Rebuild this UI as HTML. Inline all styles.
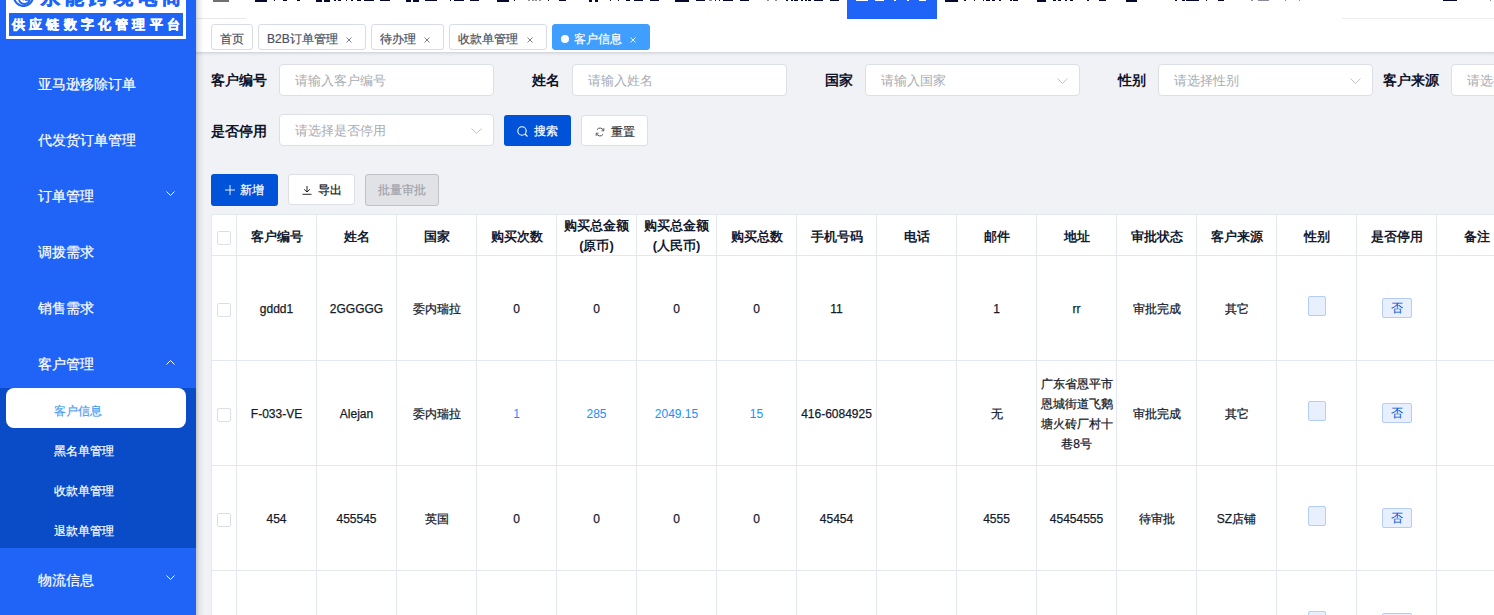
<!DOCTYPE html>
<html><head><meta charset="utf-8">
<style>
*{box-sizing:border-box;margin:0;padding:0}
html,body{width:1494px;height:615px;overflow:hidden}
body{position:relative;background:#f0f2f5;font-family:"Liberation Sans",sans-serif;color:#1f2533}
.abs{position:absolute}
#side{position:absolute;left:0;top:0;width:196px;height:615px;background:#1f64f6;overflow:hidden}
.logo{position:absolute;left:6px;top:-12px;width:180px;height:51px;background:#fff}
.logo .t1{position:absolute;left:35px;top:-2px;font-size:19px;font-weight:bold;color:#1f64f6;letter-spacing:5.2px;white-space:nowrap;line-height:24px;-webkit-text-stroke:0.6px #1f64f6}
.logo .ic{position:absolute;left:7px;top:-1.7px;width:21px;height:21px;border:2.3px solid #1f64f6;border-radius:50%}
.logo .ic2{position:absolute;left:12px;top:2.5px;width:13px;height:13px;border:1.8px solid #1f64f6;border-color:transparent #1f64f6 #1f64f6 #1f64f6;border-radius:50%}
.logo .band{position:absolute;left:3px;top:25px;width:174px;height:23px;background:#1f64f6}
.logo .t2{position:absolute;left:3px;top:4px;font-size:13px;font-weight:bold;color:#fff;letter-spacing:4.2px;white-space:nowrap;line-height:15px;-webkit-text-stroke:0.4px #fff}
.mi{position:absolute;left:38px;font-size:14px;color:#fff;line-height:20px;white-space:nowrap;-webkit-text-stroke:0.2px #fff}
.chev{position:absolute;left:166px;width:9px;height:9px}
.sub{position:absolute;left:0;top:388px;width:196px;height:160px;background:#0a4bc7}
.pill{position:absolute;left:6px;top:388px;width:180px;height:40px;background:#fff;border-radius:8px}
.si{position:absolute;left:54px;font-size:12px;color:#fff;line-height:16px;white-space:nowrap;-webkit-text-stroke:0.2px currentColor}
#hdr{position:absolute;left:196px;top:0;width:1298px;height:19px;background:#fff;overflow:hidden}
#tabs{position:absolute;left:196px;top:19px;width:1298px;height:33px;background:#fff}
.tabsh{position:absolute;left:196px;top:52px;width:1298px;height:4px;background:linear-gradient(to bottom,rgba(40,50,80,.16),rgba(40,50,80,.05) 50%,rgba(0,0,0,0))}
.shadowL{position:absolute;left:196px;top:0;width:8px;height:615px;background:linear-gradient(to right,rgba(0,0,0,.19),rgba(0,0,0,.07) 35%,rgba(0,0,0,0));z-index:5}
.tab{position:absolute;top:24px;height:26px;border:1px solid #d8dce5;border-radius:3px;background:#fff;font-size:12px;color:#495060;line-height:24px;padding-left:8px;white-space:nowrap;padding-top:2px;-webkit-text-stroke:0.2px currentColor}
.tab .x{position:absolute;top:12px;width:6px;height:6px}
.nb{position:absolute;top:0;background:#050a2e}
.lbl{position:absolute;font-size:14px;font-weight:bold;color:#10142a;line-height:20px;white-space:nowrap;text-align:right;width:68px}
.inp{position:absolute;height:32px;width:215px;background:#fff;border:1px solid #dcdfe6;border-radius:4px}
.ph{position:absolute;left:15px;top:7.5px;font-size:13px;color:#a8abb3;line-height:16px;white-space:nowrap}
.sel svg{position:absolute;top:13px;width:11px;height:6px}
.btn{position:absolute;height:31px;border-radius:3px;font-size:12px;line-height:16px;white-space:nowrap;-webkit-text-stroke:0.2px currentColor}
#tbl{position:absolute;left:211px;top:214px;width:1300px;height:420px;background:#fff;border:1px solid #e3e8ee;border-radius:2px 0 0 0;overflow:hidden}
.vl{position:absolute;top:0;width:1px;height:420px;background:#e3e8ee}
.hl{position:absolute;left:0;height:1px;width:1300px;background:#e3e8ee}
.th{position:absolute;width:79px;text-align:center;font-size:13px;font-weight:bold;color:#141a30;line-height:20px}
.td{position:absolute;width:79px;text-align:center;font-size:12px;color:#151b2b;line-height:20px;white-space:nowrap;-webkit-text-stroke:0.25px currentColor}
.cb{position:absolute;left:5px;width:14px;height:14px;border:1px solid #dcdfe6;border-radius:2px;background:#fff}
.blue{color:#1890ff;-webkit-text-stroke:0}
.tagx{position:absolute;width:18px;height:20px;background:#e8f0fe;border:1px solid #b3ccfa;border-radius:2px}
.tagn{position:absolute;width:30px;height:20px;background:#e8f0fe;border:1px solid #b3ccfa;border-radius:2px;font-size:12px;color:#0052d9;text-align:center;line-height:18px}
</style></head><body>
<div id="side">
  <div class="logo">
    
    <div class="t1">永能跨境电商</div>
    <div class="band"><div class="t2">供应链数字化管理平台</div></div>
  </div>
  <svg class="abs" style="left:13px;top:-14px" width="21" height="21" viewBox="0 0 21 21"><circle cx="10.5" cy="10.5" r="9.5" fill="none" stroke="#1f64f6" stroke-width="2.1"/><path d="M5.8 12.6 A5.6 5.6 0 0 0 17 12.2" fill="none" stroke="#1f64f6" stroke-width="1.8"/><rect x="12" y="13.6" width="5" height="1.2" fill="#1f64f6"/><rect x="10.3" y="12" width="1" height="2.6" fill="#1f64f6"/></svg>
  <div class="mi" style="top:74px">亚马逊移除订单</div>
  <div class="mi" style="top:130px">代发货订单管理</div>
  <div class="mi" style="top:186px">订单管理</div>
  <div class="mi" style="top:242px">调拨需求</div>
  <div class="mi" style="top:298px">销售需求</div>
  <div class="mi" style="top:354px">客户管理</div>
  <svg class="chev" style="top:189px;left:165.5px" viewBox="0 0 9 9"><path d="M0.5 2.5 L4.5 6.5 L8.5 2.5" fill="none" stroke="#fff" stroke-width="1"/></svg>
  <svg class="chev" style="top:358px" viewBox="0 0 9 9"><path d="M0.5 6.5 L4.5 2.5 L8.5 6.5" fill="none" stroke="#fff" stroke-width="1"/></svg>
  <div class="sub"></div>
  <div class="pill"></div>
  <div class="si" style="top:403px;color:#4aa0f5">客户信息</div>
  <div class="si" style="top:443px">黑名单管理</div>
  <div class="si" style="top:483px">收款单管理</div>
  <div class="si" style="top:523px">退款单管理</div>
  <div class="mi" style="top:570px">物流信息</div>
  <svg class="chev" style="top:573px;left:165.5px" viewBox="0 0 9 9"><path d="M0.5 2.5 L4.5 6.5 L8.5 2.5" fill="none" stroke="#fff" stroke-width="1"/></svg>
</div>
<div class="shadowL"></div>
<div id="hdr"></div>
<div class="abs" style="left:196px;top:18px;width:50px;height:1px;background:#e8e8ea"></div><div class="abs" style="left:1342px;top:18px;width:152px;height:1px;background:#ececee"></div><div class="abs" style="left:213px;top:0;width:16px;height:2px;background:#707070"></div><div class="abs" style="left:847px;top:0;width:90px;height:19px;background:#1f64f6"></div><div class="nb" style="left:255px;width:12px;height:2px"></div><div class="nb" style="left:274px;width:1px;height:1px"></div><div class="nb" style="left:283px;width:4px;height:1px"></div><div class="nb" style="left:297px;width:3px;height:1px"></div><div class="nb" style="left:316px;width:6px;height:2px"></div><div class="nb" style="left:324px;width:6px;height:2px"></div><div class="nb" style="left:334px;width:2px;height:1px"></div><div class="nb" style="left:338px;width:3px;height:1px"></div><div class="nb" style="left:346px;width:1px;height:1px"></div><div class="nb" style="left:351px;width:2px;height:1px"></div><div class="nb" style="left:357px;width:4px;height:1px"></div><div class="nb" style="left:364px;width:10px;height:1px"></div><div class="nb" style="left:380px;width:10px;height:1px"></div><div class="nb" style="left:406px;width:5px;height:2px"></div><div class="nb" style="left:413px;width:6px;height:2px"></div><div class="nb" style="left:425px;width:12px;height:1px"></div><div class="nb" style="left:450px;width:1px;height:1px"></div><div class="nb" style="left:454px;width:10px;height:1px"></div><div class="nb" style="left:470px;width:9px;height:1px"></div><div class="nb" style="left:497px;width:12px;height:2px"></div><div class="nb" style="left:514px;width:1px;height:1px"></div><div class="nb" style="left:548px;width:1px;height:1px"></div><div class="nb" style="left:559px;width:7px;height:1px"></div><div class="nb" style="left:589px;width:3px;height:2px"></div><div class="nb" style="left:595px;width:3px;height:2px"></div><div class="nb" style="left:610px;width:1px;height:1px"></div><div class="nb" style="left:618px;width:1px;height:1px"></div><div class="nb" style="left:626px;width:4px;height:1px"></div><div class="nb" style="left:634px;width:9px;height:1px"></div><div class="nb" style="left:650px;width:9px;height:1px"></div><div class="nb" style="left:675px;width:14px;height:2px"></div><div class="nb" style="left:696px;width:9px;height:1px"></div><div class="nb" style="left:715px;width:1px;height:1px"></div><div class="nb" style="left:719px;width:1px;height:1px"></div><div class="nb" style="left:723px;width:10px;height:1px"></div><div class="nb" style="left:740px;width:9px;height:1px"></div><div class="nb" style="left:786px;width:2px;height:1px"></div><div class="nb" style="left:791px;width:2px;height:1px"></div><div class="nb" style="left:794px;width:4px;height:1px"></div><div class="nb" style="left:801px;width:2px;height:1px"></div><div class="nb" style="left:805px;width:2px;height:1px"></div><div class="nb" style="left:808px;width:3px;height:1px"></div><div class="nb" style="left:814px;width:9px;height:1px"></div><div class="nb" style="left:830px;width:9px;height:1px"></div><div class="nb" style="left:945px;width:13px;height:2px"></div><div class="nb" style="left:964px;width:2px;height:1px"></div><div class="nb" style="left:974px;width:1px;height:1px"></div><div class="nb" style="left:983px;width:1px;height:1px"></div><div class="nb" style="left:986px;width:4px;height:1px"></div><div class="nb" style="left:992px;width:3px;height:1px"></div><div class="nb" style="left:999px;width:2px;height:1px"></div><div class="nb" style="left:1010px;width:2px;height:1px"></div><div class="nb" style="left:1013px;width:5px;height:1px"></div><div class="nb" style="left:1037px;width:9px;height:2px"></div><div class="nb" style="left:1053px;width:3px;height:1px"></div><div class="nb" style="left:1058px;width:3px;height:1px"></div><div class="nb" style="left:1065px;width:2px;height:1px"></div><div class="nb" style="left:1070px;width:3px;height:1px"></div><div class="nb" style="left:1087px;width:2px;height:1px"></div><div class="nb" style="left:1099px;width:7px;height:1px"></div><div class="nb" style="left:1126px;width:11px;height:2px"></div><div class="nb" style="left:1175px;width:2px;height:1px"></div><div class="nb" style="left:1182px;width:3px;height:1px"></div><div class="nb" style="left:1186px;width:13px;height:1px"></div><div class="nb" style="left:1206px;width:1px;height:1px"></div><div class="nb" style="left:1218px;width:6px;height:1px"></div><div class="nb" style="left:1443px;width:14px;height:1px"></div><div class="nb" style="left:528px;width:2px;height:1px;background:#8a8c99"></div><div class="nb" style="left:532px;width:2px;height:1px;background:#8a8c99"></div><div class="nb" style="left:535px;width:2px;height:1px;background:#8a8c99"></div><div class="nb" style="left:539px;width:2px;height:1px;background:#8a8c99"></div><div class="nb" style="left:709px;width:3px;height:1px;background:#8a8c99"></div><div class="nb" style="left:767px;width:2px;height:1px;background:#8a8c99"></div><div class="nb" style="left:775px;width:2px;height:1px;background:#8a8c99"></div><div class="nb" style="left:1251px;width:2px;height:1px;background:#8a8c99"></div><div class="nb" style="left:1258px;width:11px;height:1px;background:#8a8c99"></div><div class="nb" style="left:1285px;width:1px;height:1px;background:#8a8c99"></div><div class="nb" style="left:1299px;width:1px;height:1px;background:#8a8c99"></div><div class="nb" style="left:1490px;width:1px;height:1px;background:#8a8c99"></div><div class="nb" style="left:856px;width:12px;height:1px;background:#fff"></div><div class="nb" style="left:875px;width:9px;height:1px;background:#fff"></div><div class="nb" style="left:894px;width:2px;height:1px;background:#fff"></div><div class="nb" style="left:907px;width:2px;height:1px;background:#fff"></div><div class="nb" style="left:919px;width:7px;height:1px;background:#fff"></div><div id="tabs"></div><div class="tabsh"></div>
<div class="tab" style="left:211px;width:42px">首页</div>
<div class="tab" style="left:258px;width:108px">B2B订单管理<svg class="x" style="left:87px" viewBox="0 0 6 6"><path d="M0.5 0.5 L5.5 5.5 M5.5 0.5 L0.5 5.5" stroke="#6a7080" stroke-width="0.9"/></svg></div>
<div class="tab" style="left:371px;width:73px">待办理<svg class="x" style="left:52px" viewBox="0 0 6 6"><path d="M0.5 0.5 L5.5 5.5 M5.5 0.5 L0.5 5.5" stroke="#6a7080" stroke-width="0.9"/></svg></div>
<div class="tab" style="left:449px;width:98px">收款单管理<svg class="x" style="left:77px" viewBox="0 0 6 6"><path d="M0.5 0.5 L5.5 5.5 M5.5 0.5 L0.5 5.5" stroke="#6a7080" stroke-width="0.9"/></svg></div>
<div class="tab" style="left:552px;width:98px;background:#409eff;border-color:#409eff;color:#fff;padding-left:21px">客户信息<svg class="x" style="left:77px" viewBox="0 0 6 6"><path d="M0.5 0.5 L5.5 5.5 M5.5 0.5 L0.5 5.5" stroke="#fff" stroke-width="0.9"/></svg><span class="abs" style="left:8px;top:10px;width:8px;height:8px;border-radius:50%;background:#fff"></span></div>
<div class="lbl" style="left:199px;top:70px">客户编号</div><div class="inp" style="left:279px;top:64px"><div class="ph">请输入客户编号</div></div><div class="lbl" style="left:492px;top:70px">姓名</div><div class="inp" style="left:572px;top:64px"><div class="ph">请输入姓名</div></div><div class="lbl" style="left:785px;top:70px">国家</div><div class="inp sel" style="left:865px;top:64px"><div class="ph">请输入国家</div><svg style="left:191px" viewBox="0 0 11 6"><path d="M0.5 0.5 L5.5 5.5 L10.5 0.5" fill="none" stroke="#c0c4cc" stroke-width="1"/></svg></div><div class="lbl" style="left:1078px;top:70px">性别</div><div class="inp sel" style="left:1158px;top:64px"><div class="ph">请选择性别</div><svg style="left:191px" viewBox="0 0 11 6"><path d="M0.5 0.5 L5.5 5.5 L10.5 0.5" fill="none" stroke="#c0c4cc" stroke-width="1"/></svg></div><div class="lbl" style="left:1371px;top:70px">客户来源</div><div class="inp sel" style="left:1451px;top:64px"><div class="ph">请选择客户来源</div><svg style="left:191px" viewBox="0 0 11 6"><path d="M0.5 0.5 L5.5 5.5 L10.5 0.5" fill="none" stroke="#c0c4cc" stroke-width="1"/></svg></div><div class="lbl" style="left:199px;top:121px">是否停用</div><div class="inp sel" style="left:279px;top:114px"><div class="ph">请选择是否停用</div><svg style="left:191px" viewBox="0 0 11 6"><path d="M0.5 0.5 L5.5 5.5 L10.5 0.5" fill="none" stroke="#c0c4cc" stroke-width="1"/></svg></div><div class="btn" style="left:504px;top:115px;width:67px;background:#0052d9;color:#fff">
<svg class="abs" style="left:13px;top:11px" width="11" height="11" viewBox="0 0 11 11"><circle cx="5" cy="5" r="4.2" fill="none" stroke="#fff" stroke-width="1.1"/><path d="M8 8 L10.5 10.5" stroke="#fff" stroke-width="1.1"/></svg>
<span class="abs" style="left:30px;top:8px">搜索</span></div><div class="btn" style="left:581px;top:115px;width:67px;background:#fff;border:1px solid #dcdfe6;color:#333">
<svg class="abs" style="left:13px;top:11px" width="10" height="10" viewBox="0 0 10 10"><path d="M8.6 3.6 A3.8 3.8 0 0 0 1.8 2.8 M1.4 6.4 A3.8 3.8 0 0 0 8.2 7.2" fill="none" stroke="#555" stroke-width="1"/><path d="M8.8 1.2 L8.8 3.8 L6.4 3.8" fill="none" stroke="#555" stroke-width="0.9"/><path d="M1.2 8.8 L1.2 6.2 L3.6 6.2" fill="none" stroke="#555" stroke-width="0.9"/></svg>
<span class="abs" style="left:29px;top:8px">重置</span></div><div class="btn" style="left:211px;top:174px;width:67px;height:32px;background:#0052d9;color:#fff">
<svg class="abs" style="left:14px;top:11px" width="10" height="10" viewBox="0 0 10 10"><path d="M5 0 V10 M0 5 H10" stroke="#fff" stroke-width="0.9"/></svg>
<span class="abs" style="left:29px;top:8px">新增</span></div><div class="btn" style="left:288px;top:174px;width:67px;background:#fff;border:1px solid #dcdfe6;color:#111">
<svg class="abs" style="left:13px;top:10px" width="10" height="10" viewBox="0 0 10 10"><path d="M5 1 V7 M2.2 4.3 L5 7 L7.8 4.3 M0.5 9.3 H9.5" fill="none" stroke="#111" stroke-width="0.9"/></svg>
<span class="abs" style="left:29px;top:7px">导出</span></div><div class="btn" style="left:365px;top:174px;width:74px;height:32px;background:#e1e2e6;border:1px solid #bfc1c7;color:#a0a2a9">
<span class="abs" style="left:12px;top:7px">批量审批</span></div><div id="tbl"><div class="vl" style="left:24px"></div><div class="vl" style="left:104px"></div><div class="vl" style="left:184px"></div><div class="vl" style="left:264px"></div><div class="vl" style="left:344px"></div><div class="vl" style="left:424px"></div><div class="vl" style="left:504px"></div><div class="vl" style="left:584px"></div><div class="vl" style="left:664px"></div><div class="vl" style="left:744px"></div><div class="vl" style="left:824px"></div><div class="vl" style="left:904px"></div><div class="vl" style="left:984px"></div><div class="vl" style="left:1064px"></div><div class="vl" style="left:1144px"></div><div class="vl" style="left:1224px"></div><div class="vl" style="left:1304px"></div><div class="hl" style="top:40px"></div><div class="hl" style="top:145px"></div><div class="hl" style="top:250px"></div><div class="hl" style="top:355px"></div><div class="cb" style="top:16px"></div><div class="th" style="left:25px;top:11.5px">客户编号</div><div class="th" style="left:105px;top:11.5px">姓名</div><div class="th" style="left:185px;top:11.5px">国家</div><div class="th" style="left:265px;top:11.5px">购买次数</div><div class="th" style="left:345px;top:1px">购买总金额<br>(原币)</div><div class="th" style="left:425px;top:1px">购买总金额<br>(人民币)</div><div class="th" style="left:505px;top:11.5px">购买总数</div><div class="th" style="left:585px;top:11.5px">手机号码</div><div class="th" style="left:665px;top:11.5px">电话</div><div class="th" style="left:745px;top:11.5px">邮件</div><div class="th" style="left:825px;top:11.5px">地址</div><div class="th" style="left:905px;top:11.5px">审批状态</div><div class="th" style="left:985px;top:11.5px">客户来源</div><div class="th" style="left:1065px;top:11.5px">性别</div><div class="th" style="left:1145px;top:11.5px">是否停用</div><div class="th" style="left:1225px;top:11.5px">备注</div><div class="cb" style="top:88px"></div><div class="td" style="left:25px;top:84px">gddd1</div><div class="td" style="left:105px;top:84px">2GGGGG</div><div class="td" style="left:185px;top:84px">委内瑞拉</div><div class="td" style="left:265px;top:84px">0</div><div class="td" style="left:345px;top:84px">0</div><div class="td" style="left:425px;top:84px">0</div><div class="td" style="left:505px;top:84px">0</div><div class="td" style="left:585px;top:84px">11</div><div class="td" style="left:745px;top:84px">1</div><div class="td" style="left:825px;top:84px">rr</div><div class="td" style="left:905px;top:84px">审批完成</div><div class="td" style="left:985px;top:84px">其它</div><div class="tagx" style="left:1096px;top:81px"></div><div class="tagn" style="left:1170px;top:83px">否</div><div class="cb" style="top:193px"></div><div class="td" style="left:25px;top:189px">F-033-VE</div><div class="td" style="left:105px;top:189px">Alejan</div><div class="td" style="left:185px;top:189px">委内瑞拉</div><div class="td" style="left:265px;top:189px"><span class="blue">1</span></div><div class="td" style="left:345px;top:189px"><span class="blue">285</span></div><div class="td" style="left:425px;top:189px"><span class="blue">2049.15</span></div><div class="td" style="left:505px;top:189px"><span class="blue">15</span></div><div class="td" style="left:585px;top:189px">416-6084925</div><div class="td" style="left:745px;top:189px">无</div><div class="td" style="left:825px;top:159px">广东省恩平市<br>恩城街道飞鹅<br>塘火砖厂村十<br>巷8号</div><div class="td" style="left:905px;top:189px">审批完成</div><div class="td" style="left:985px;top:189px">其它</div><div class="tagx" style="left:1096px;top:186px"></div><div class="tagn" style="left:1170px;top:188px">否</div><div class="cb" style="top:298px"></div><div class="td" style="left:25px;top:294px">454</div><div class="td" style="left:105px;top:294px">455545</div><div class="td" style="left:185px;top:294px">英国</div><div class="td" style="left:265px;top:294px">0</div><div class="td" style="left:345px;top:294px">0</div><div class="td" style="left:425px;top:294px">0</div><div class="td" style="left:505px;top:294px">0</div><div class="td" style="left:585px;top:294px">45454</div><div class="td" style="left:745px;top:294px">4555</div><div class="td" style="left:825px;top:294px">45454555</div><div class="td" style="left:905px;top:294px">待审批</div><div class="td" style="left:985px;top:294px">SZ店铺</div><div class="tagx" style="left:1096px;top:291px"></div><div class="tagn" style="left:1170px;top:293px">否</div><div class="cb" style="top:403px"></div><div class="tagx" style="left:1096px;top:396px"></div><div class="tagn" style="left:1170px;top:398px">否</div></div></body></html>
